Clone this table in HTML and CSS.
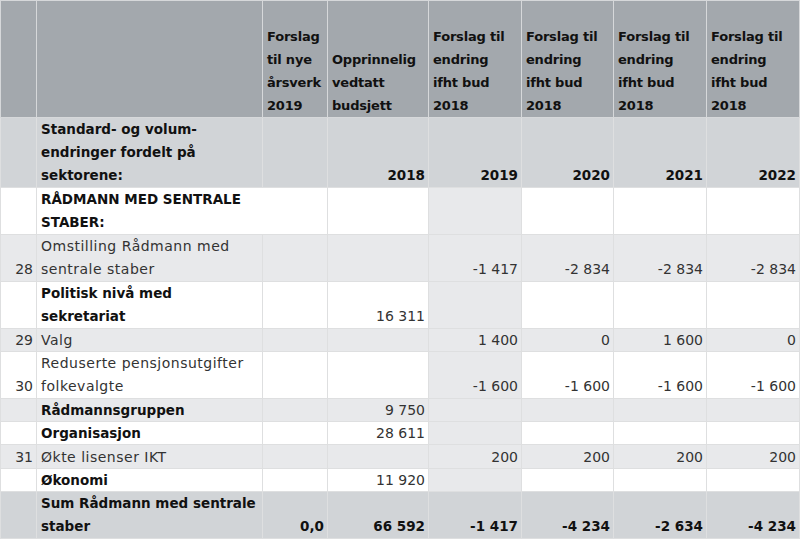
FILE: index.html
```html
<!DOCTYPE html>
<html lang="no">
<head>
<meta charset="utf-8">
<title>Budsjett</title>
<link rel="stylesheet" href="styles.css">
</head>
<body>
<table class="budget">
  <colgroup>
    <col class="c-num">
    <col class="c-label">
    <col class="c-aarsverk">
    <col class="c-opp">
    <col class="c-y">
    <col class="c-y2">
    <col class="c-y">
    <col class="c-y">
  </colgroup>
  <tr class="head">
    <td></td>
    <td></td>
    <td>Forslag<br>til nye<br>årsverk<br>2019</td>
    <td>Opprinnelig<br>vedtatt<br>budsjett</td>
    <td>Forslag til<br>endring<br>ifht bud<br>2018</td>
    <td>Forslag til<br>endring<br>ifht bud<br>2018</td>
    <td>Forslag til<br>endring<br>ifht bud<br>2018</td>
    <td>Forslag til<br>endring<br>ifht bud<br>2018</td>
  </tr>
  <tr class="sub">
    <td></td>
    <td class="lbl b">Standard- og volum-<br>endringer fordelt på<br>sektorene:</td>
    <td></td>
    <td class="n b">2018</td>
    <td class="n b">2019</td>
    <td class="n b">2020</td>
    <td class="n b">2021</td>
    <td class="n b">2022</td>
  </tr>
  <tr class="w r2 first">
    <td></td>
    <td class="lbl b" colspan="2">RÅDMANN MED SENTRALE<br>STABER:</td>
    <td></td>
    <td class="y19"></td>
    <td></td>
    <td></td>
    <td></td>
  </tr>
  <tr class="g r2">
    <td class="n">28</td>
    <td class="lbl">Omstilling Rådmann med<br>sentrale staber</td>
    <td></td>
    <td></td>
    <td class="n y19">-1&nbsp;417</td>
    <td class="n">-2&nbsp;834</td>
    <td class="n">-2&nbsp;834</td>
    <td class="n">-2&nbsp;834</td>
  </tr>
  <tr class="w r2">
    <td></td>
    <td class="lbl b">Politisk nivå med<br>sekretariat</td>
    <td></td>
    <td class="n">16&nbsp;311</td>
    <td class="y19"></td>
    <td></td>
    <td></td>
    <td></td>
  </tr>
  <tr class="g r1">
    <td class="n">29</td>
    <td class="lbl">Valg</td>
    <td></td>
    <td></td>
    <td class="n y19">1&nbsp;400</td>
    <td class="n">0</td>
    <td class="n">1&nbsp;600</td>
    <td class="n">0</td>
  </tr>
  <tr class="w r2">
    <td class="n">30</td>
    <td class="lbl">Reduserte pensjonsutgifter<br>folkevalgte</td>
    <td></td>
    <td></td>
    <td class="n y19">-1&nbsp;600</td>
    <td class="n">-1&nbsp;600</td>
    <td class="n">-1&nbsp;600</td>
    <td class="n">-1&nbsp;600</td>
  </tr>
  <tr class="g r1">
    <td></td>
    <td class="lbl b">Rådmannsgruppen</td>
    <td></td>
    <td class="n">9&nbsp;750</td>
    <td class="y19"></td>
    <td></td>
    <td></td>
    <td></td>
  </tr>
  <tr class="w r1">
    <td></td>
    <td class="lbl b">Organisasjon</td>
    <td></td>
    <td class="n">28&nbsp;611</td>
    <td class="y19"></td>
    <td></td>
    <td></td>
    <td></td>
  </tr>
  <tr class="g r1 tall">
    <td class="n">31</td>
    <td class="lbl">Økte lisenser IKT</td>
    <td></td>
    <td></td>
    <td class="n y19">200</td>
    <td class="n">200</td>
    <td class="n">200</td>
    <td class="n">200</td>
  </tr>
  <tr class="w r1">
    <td></td>
    <td class="lbl b">Økonomi</td>
    <td></td>
    <td class="n">11&nbsp;920</td>
    <td class="y19"></td>
    <td></td>
    <td></td>
    <td></td>
  </tr>
  <tr class="sum r2">
    <td></td>
    <td class="lbl b">Sum Rådmann med sentrale<br>staber</td>
    <td class="n b">0,0</td>
    <td class="n b">66&nbsp;592</td>
    <td class="n b">-1&nbsp;417</td>
    <td class="n b">-4&nbsp;234</td>
    <td class="n b">-2&nbsp;634</td>
    <td class="n b">-4&nbsp;234</td>
  </tr>
</table>
</body>
</html>
```

FILE: styles.css
```css
html, body {
  margin: 0;
  padding: 0;
  background: #ffffff;
}

.budget {
  border-collapse: collapse;
  table-layout: fixed;
  width: 799px;
  font-family: "DejaVu Sans", "Liberation Sans", sans-serif;
  font-size: 14px;
  color: #333333;
}

.c-num { width: 36px; }
.c-label { width: 226px; }
.c-aarsverk { width: 65px; }
.c-opp { width: 101px; }
.c-y { width: 93px; }
.c-y2 { width: 92px; }

.budget td {
  border: 1px solid #dedfe0;
  padding: 0 3px 0 4px;
  vertical-align: bottom;
  line-height: 23px;
  white-space: nowrap;
  overflow: hidden;
}

/* header */
.head {
  height: 117px;
}
.head td {
  background: #a3a8ad;
  border-color: #d6d8da;
  font-weight: bold;
  font-size: 13px;
  letter-spacing: -0.2px;
  color: #111111;
  text-align: left;
  padding: 0 1px 0 4px;
}

/* subheader row */
.sub {
  height: 70px;
}
.sub td {
  background: #d1d4d7;
}

.sum {
  height: 47px;
}
.sum td {
  background: #d1d4d7;
}

.r2 { height: 47px; }
.r2.first { height: 46px; }
.r1 { height: 23px; }
.r1 td { line-height: 22px; }
.r1.tall { height: 24px; }

.w td { background: #ffffff; }
.g td { background: #e8e9eb; }
.w td.y19 { background: #e8e9eb; }

.lbl {
  text-align: left;
  letter-spacing: 0.5px;
  color: #333333;
}

.lbl.b,
.b {
  font-weight: bold;
  font-size: 13.5px;
  letter-spacing: 0;
  color: #111111;
}

.n {
  text-align: right;
}
```
